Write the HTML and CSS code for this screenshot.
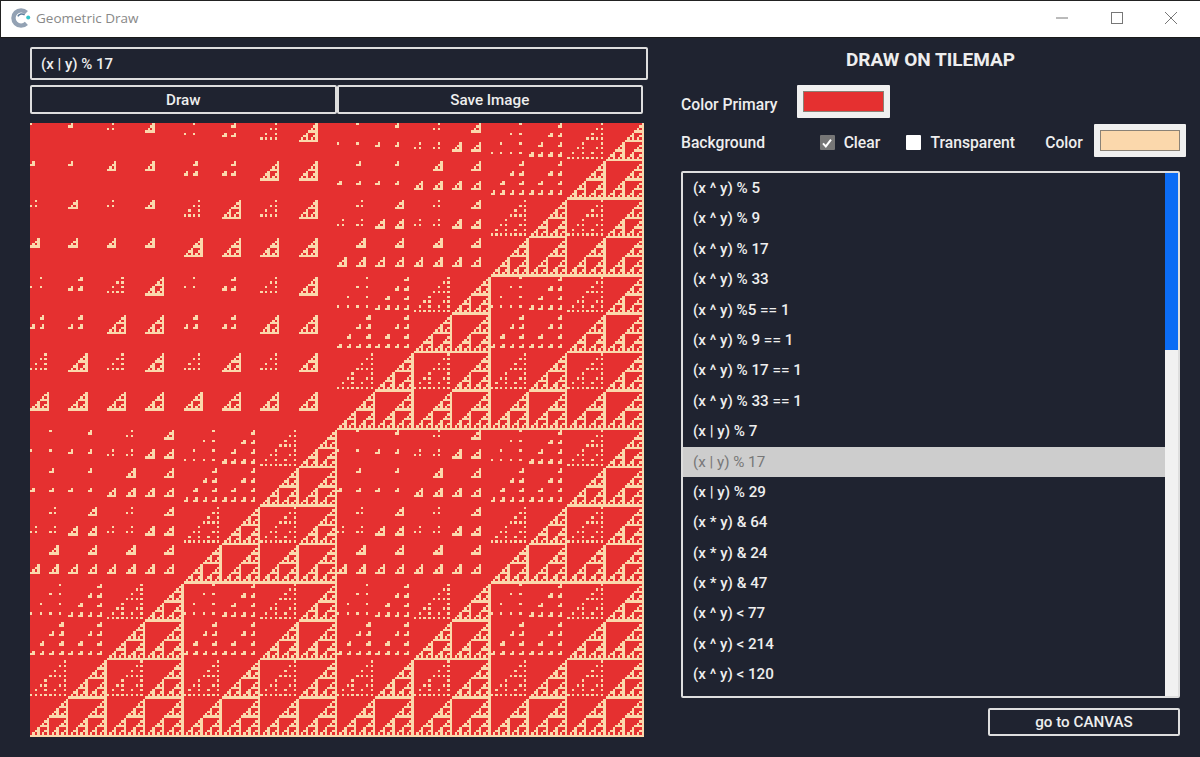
FILE: index.html
```html
<!DOCTYPE html>
<html lang="en">
<head>
<meta charset="utf-8">
<title>Geometric Draw</title>
<link rel="stylesheet" href="styles.css">
</head>
<body>
<div class="window">
  <header class="titlebar">
    <svg class="logo" width="20" height="20" viewBox="0 0 20 20">
      <path d="M15.4 4.6A7.6 7.6 0 1 0 15.4 15.4" fill="none" stroke="#93a2b4" stroke-width="4.4"/>
      <path d="M13.6 7A4.4 4.4 0 0 0 6.8 8.4" fill="none" stroke="#5b7a9a" stroke-width="1.4"/>
      <circle cx="17.2" cy="9.6" r="2" fill="#35c3c8"/>
    </svg>
    <span class="app-name">Geometric Draw</span>
    <div class="controls">
      <svg class="ctl" width="14" height="14" viewBox="0 0 14 14"><path d="M1 7H13" stroke="#777" fill="none"/></svg>
      <svg class="ctl" width="14" height="14" viewBox="0 0 14 14"><rect x="1.5" y="1.5" width="11" height="11" stroke="#777" fill="none"/></svg>
      <svg class="ctl" width="14" height="14" viewBox="0 0 14 14"><path d="M1 1L13 13M13 1L1 13" stroke="#777" fill="none"/></svg>
    </div>
  </header>
  <main class="content">
    <section class="left">
      <div class="formula">(x | y) % 17</div>
      <div class="actions">
        <button class="btn btn-action">Draw</button>
        <button class="btn btn-action">Save Image</button>
      </div>
      <canvas id="tilemap" class="tilemap" width="614" height="614"></canvas>
    </section>
    <section class="right">
      <h1 class="heading">DRAW ON TILEMAP</h1>
      <div class="row-primary">
        <span class="label">Color Primary</span>
        <span class="swatch"><span class="swatch-fill fill-red"></span></span>
      </div>
      <div class="row-bg">
        <span class="label label-bg">Background</span>
        <span class="check check-on"><svg width="12" height="12" viewBox="0 0 12 12"><path d="M2 6.4L4.8 9.4L10 2.6" fill="none" stroke="#fff" stroke-width="2"/></svg></span>
        <span class="label label-clear">Clear</span>
        <span class="check"></span>
        <span class="label label-trans">Transparent</span>
        <span class="label label-color">Color</span>
        <span class="swatch"><span class="swatch-fill fill-peach"></span></span>
      </div>
      <div class="listbox">
        <ul class="items">
          <li>(x ^ y) % 5</li>
          <li>(x ^ y) % 9</li>
          <li>(x ^ y) % 17</li>
          <li>(x ^ y) % 33</li>
          <li>(x ^ y) %5 == 1</li>
          <li>(x ^ y) % 9 == 1</li>
          <li>(x ^ y) % 17 == 1</li>
          <li>(x ^ y) % 33 == 1</li>
          <li>(x | y) % 7</li>
          <li class="selected">(x | y) % 17</li>
          <li>(x | y) % 29</li>
          <li>(x * y) &amp; 64</li>
          <li>(x * y) &amp; 24</li>
          <li>(x * y) &amp; 47</li>
          <li>(x ^ y) &lt; 77</li>
          <li>(x ^ y) &lt; 214</li>
          <li>(x ^ y) &lt; 120</li>
        </ul>
        <div class="scrollbar"><div class="thumb"></div></div>
      </div>
      <div class="footer">
        <button class="btn btn-canvas">go to CANVAS</button>
      </div>
    </section>
  </main>
</div>
<script src="script.js"></script>
</body>
</html>
```
FILE: styles.css
```css
* { box-sizing: border-box; }
html, body { margin: 0; height: 100%; }
body { background: #1f2330; font-family: Roboto, "Liberation Sans", sans-serif; overflow: hidden; }
.window { width: 1200px; height: 757px; display: flex; flex-direction: column; }
.titlebar {
  height: 38px; flex: none; background: #fff; display: flex; align-items: center;
  border-top: 1px solid #222; border-left: 1px solid #222; border-bottom: 1px solid #1a1a1a;
  padding-left: 10px; padding-bottom: 2px;
}
.logo { flex: none; margin-right: 5px; }
.app-name { font: 13.5px "Open Sans", sans-serif; color: #888; }
.controls { margin-left: auto; display: flex; gap: 40.5px; padding-right: 22px; }
.ctl { display: block; }
.content { flex: 1; display: flex; padding: 9px 14px 0 30px; color: #eee; min-height: 0; }
.left { width: 618px; flex: none; margin-right: 33px; }
.formula {
  height: 33px; border: 2px solid #dedede; border-radius: 2px; padding-left: 9px;
  display: flex; align-items: center; font-size: 15px; font-weight: 500;
}
.actions { display: flex; margin-top: 5px; width: 613px; }
.btn {
  background: #1f2330; color: #eee; border: 2px solid #dedede; border-radius: 2px;
  font: 500 15.2px Roboto, sans-serif; padding: 0;
}
.btn-action { flex: 1; height: 29px; }
.tilemap { display: block; margin-top: 9px; width: 614px; height: 614px; }
.right { flex: 1; min-width: 0; position: relative; }
.heading { margin: 1px 0 0; height: 24px; line-height: 24px; font-size: 19px; font-weight: 700; text-align: center; color: #eee; padding-right: 6px; }
.label { font-size: 15.7px; font-weight: 500; color: #eee; }
.row-primary { display: flex; align-items: center; margin-top: 13px; height: 33px; }
.row-primary .label { width: 116px; position: relative; top: 3px; }
.swatch { width: 93px; height: 33px; background: #f0f0f0; border-radius: 1px; padding: 6px; display: block; flex: none; }
.row-bg .swatch { width: 92px; }
.swatch-fill { display: block; height: 100%; border: 1px solid #8a8276; }
.fill-red { background: #e53030; }
.fill-peach { background: #fbd8ac; }
.row-bg { display: flex; align-items: center; margin-top: 6px; height: 33px; }
.label-bg { width: 139px; position: relative; top: 2px; }
.check { width: 15px; height: 15px; background: #fff; border-radius: 1px; position: relative; top: 2px; display: flex; align-items: center; justify-content: center; }
.check-on { background: #767676; }
.label-clear { margin-left: 9px; width: 63px; position: relative; top: 2px; }
.label-trans { margin-left: 9px; width: 115px; position: relative; top: 2px; }
.label-color { width: 49px; position: relative; top: 2px; }
.listbox { margin-top: 14px; width: 499px; height: 527px; border: 2px solid #dedede; border-radius: 2px; display: flex; }
.items { flex: 1; margin: 0; padding: 0; list-style: none; overflow: hidden; }
.items li { height: 30.4px; line-height: 30.4px; padding-left: 10px; font-size: 15.2px; font-weight: 500; color: #eee; }
.items .selected { background: #cdcdcd; color: #777; font-weight: 400; }
.scrollbar { width: 13px; flex: none; background: #f1f1f1; }
.thumb { height: 177px; background: #0b6cf5; }
.footer { display: flex; justify-content: flex-end; margin-top: 10px; width: 499px; }
.btn-canvas { width: 192px; height: 28px; }
```
FILE: script.js
```js
var canvas = document.getElementById('tilemap');
var ctx = canvas.getContext('2d');
var size = 256;
var scale = canvas.width / size;
ctx.fillStyle = '#e53030';
ctx.fillRect(0, 0, canvas.width, canvas.height);
ctx.fillStyle = '#fbd8ac';
for (var y = 0; y < size; y++) {
  for (var x = 0; x < size; x++) {
    if ((x | y) % 17 === 0) {
      var x0 = Math.round(x * scale), y0 = Math.round(y * scale);
      var x1 = Math.round((x + 1) * scale), y1 = Math.round((y + 1) * scale);
      ctx.fillRect(x0, y0, x1 - x0, y1 - y0);
    }
  }
}
```
